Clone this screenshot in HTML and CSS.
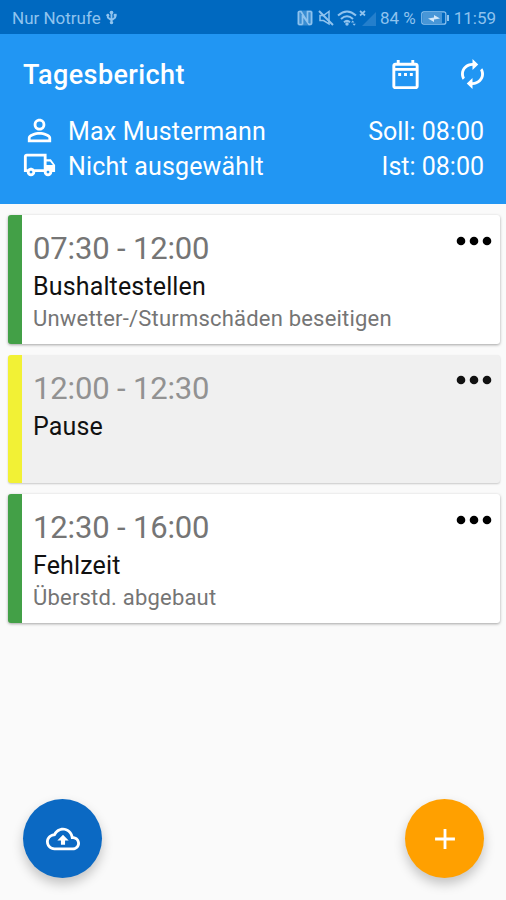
FILE: index.html
```html
<!DOCTYPE html>
<html lang="de">
<head>
    <meta charset="UTF-8">
    <meta name="viewport" content="width=device-width, initial-scale=1.0">
    <title>Tagesbericht</title>
    <link rel="stylesheet" href="styles.css">
</head>
<body>
    <div class="statusbar">
        <span class="carrier">Nur Notrufe</span>
        <svg class="usb" viewBox="0 0 12 16"><path d="M6 1v14M2 5v3l4 3 4-3V5" fill="none" stroke="currentColor" stroke-width="2"/><circle cx="6" cy="2.5" r="2"/><circle cx="6" cy="13.5" r="1.8"/><circle cx="2" cy="5.5" r="1.6"/><path d="M8.4 4h3.2v3H8.4z"/></svg>
        <div class="status-icons">
            <svg class="nfc" viewBox="0 0 16 16"><rect x=".5" y=".5" width="15" height="15" rx="2" opacity=".4"/><path d="M1.500 14.500V2.500Q1.500 1.500 2.500 1.500H4l6.500 10.500V5M5.500 5v9.500M5.500 14.500h-4M14.500 1.500v11.500q0 1.500-1.500 1.500h-1L5.500 5M10.500 5V1.500h4" fill="none" stroke="currentColor" stroke-width="1.700"/></svg>
            <svg class="mute" viewBox="0 0 16 16"><path d="M2 5.500h3.500L11 1.500v12.500L5.500 10.500H2z" fill="none" stroke="currentColor" stroke-width="1.500"/><path d="M1 1l14 14" stroke="currentColor" stroke-width="2"/></svg>
            <svg class="wifi" viewBox="0 0 20 16"><path d="M1 5.500Q10-2.500 19 5.500M4 9Q10 3.500 16 9M7 12.200Q10 9.500 13 12.200" fill="none" stroke="currentColor" stroke-width="2"/><circle cx="10" cy="14" r="1.700"/><path d="M14 12.500l1.700-2 1.700 2zM15.500 13.700h3.400l-1.700 2z"/></svg>
            <svg class="signal" viewBox="0 0 18 16"><path d="M17 2v14H3z" opacity=".25"/><path d="M1 1l5 4.500M6 1L1 5.500" stroke="currentColor" stroke-width="1.700"/></svg>
            <span class="percent">84 %</span>
            <svg class="battery" viewBox="0 0 28 14"><rect x=".8" y=".8" width="24" height="12.400" rx="2" fill="none" stroke="currentColor" stroke-width="1.200"/><rect x="2" y="2" width="19" height="10" opacity=".5"/><path d="M26 4h2v6h-2z"/><path d="M7 7.500l6-1V4l6 3.500-6 1V11z" fill="#d3e8fa"/></svg>
            <span class="clock">11:59</span>
        </div>
    </div>

    <header class="header">
        <div class="toolbar">
            <h1>Tagesbericht</h1>
            <svg class="icon calendar" viewBox="0 0 24 24"><path d="M19 4h-1V2h-2v2H8V2H6v2H5c-1.100 0-2 .9-2 2v14c0 1.100.9 2 2 2h14c1.100 0 2-.9 2-2V6c0-1.100-.9-2-2-2zm0 16H5V9.500h14V20zm0-12.500H5V6h14v1.500zM7 11h2v2H7zm4 0h2v2h-2zm4 0h2v2h-2z"/></svg>
            <svg class="icon sync" viewBox="4 1 16 22" preserveAspectRatio="none"><path d="M12 6v3l4-4-4-4v3c-4.420 0-8 3.580-8 8 0 1.570.46 3.030 1.240 4.260L6.700 14.800c-.45-.83-.7-1.790-.7-2.800 0-3.310 2.690-6 6-6zm6.760 1.740L17.300 9.200c.44.84.7 1.790.7 2.800 0 3.310-2.690 6-6 6v-3l-4 4 4 4v-3c4.420 0 8-3.580 8-8 0-1.570-.46-3.030-1.240-4.260z"/></svg>
        </div>
        <div class="info">
            <svg class="icon person" viewBox="0 0 24 24"><path d="M12 5.900a2.100 2.100 0 1 1 0 4.200 2.100 2.100 0 0 1 0-4.200m0 9c2.970 0 6.100 1.460 6.100 2.100v1.100H5.900V17c0-.64 3.130-2.100 6.100-2.100M12 4C9.790 4 8 5.790 8 8s1.790 4 4 4 4-1.790 4-4-1.790-4-4-4zm0 9c-2.670 0-8 1.340-8 4v3h16v-3c0-2.660-5.330-4-8-4z"/></svg>
            <span class="user">Max Mustermann</span>
            <span class="hours">Soll: 08:00</span>
        </div>
        <div class="info">
            <svg class="icon truck" viewBox="0 0 24 24"><path fill-rule="evenodd" d="M20 8h-3V4H3c-1.100 0-2 .9-2 2v11h2c0 1.660 1.340 3 3 3s3-1.340 3-3h6c0 1.660 1.340 3 3 3s3-1.340 3-3h2v-5l-3-4zm-.5 1.500l1.960 2.500H17V9.500h2.500zM6 18c-.55 0-1-.45-1-1s.45-1 1-1 1 .45 1 1-.45 1-1 1zm2.220-3c-.55-.61-1.330-1-2.220-1s-1.670.39-2.220 1H3V6h12v9H8.220zM18 18c-.55 0-1-.45-1-1s.45-1 1-1 1 .45 1 1-.45 1-1 1z"/></svg>
            <span class="vehicle">Nicht ausgewählt</span>
            <span class="hours">Ist: 08:00</span>
        </div>
    </header>

    <main class="list">
        <article class="card">
            <div class="entry">
                <div class="time">07:30 - 12:00</div>
                <div class="name">Bushaltestellen</div>
                <div class="desc">Unwetter-/Sturmschäden beseitigen</div>
            </div>
            <svg class="more" viewBox="0 0 36 10"><circle cx="5" cy="5" r="4.300"/><circle cx="18" cy="5" r="4.300"/><circle cx="31" cy="5" r="4.300"/></svg>
        </article>
        <article class="card pause">
            <div class="entry">
                <div class="time">12:00 - 12:30</div>
                <div class="name">Pause</div>
            </div>
            <svg class="more" viewBox="0 0 36 10"><circle cx="5" cy="5" r="4.300"/><circle cx="18" cy="5" r="4.300"/><circle cx="31" cy="5" r="4.300"/></svg>
        </article>
        <article class="card">
            <div class="entry">
                <div class="time">12:30 - 16:00</div>
                <div class="name">Fehlzeit</div>
                <div class="desc">Überstd. abgebaut</div>
            </div>
            <svg class="more" viewBox="0 0 36 10"><circle cx="5" cy="5" r="4.300"/><circle cx="18" cy="5" r="4.300"/><circle cx="31" cy="5" r="4.300"/></svg>
        </article>
    </main>

    <footer class="actions">
        <button class="fab upload" aria-label="Hochladen">
            <svg viewBox="0 0 24 24"><path d="M19.350 10.040C18.670 6.590 15.640 4 12 4 9.110 4 6.600 5.640 5.350 8.040 2.340 8.360 0 10.910 0 14c0 3.310 2.690 6 6 6h13c2.760 0 5-2.240 5-5 0-2.640-2.050-4.780-4.650-4.960zM19 18H6c-2.210 0-4-1.790-4-4 0-2.050 1.530-3.760 3.560-3.970l1.070-.11.5-.95C8.080 7.140 9.940 6 12 6c2.620 0 4.880 1.860 5.390 4.430l.3 1.500 1.530.11c1.560.1 2.780 1.410 2.780 2.960 0 1.650-1.350 3-3 3zM8 13h2.550v3h2.900v-3H16l-4-4z"/></svg>
        </button>
        <button class="fab add" aria-label="Hinzufügen">
            <svg viewBox="0 0 24 24"><path d="M19 13h-6v6h-2v-6H5v-2h6V5h2v6h6v2z"/></svg>
        </button>
    </footer>
</body>
</html>
```
FILE: styles.css
```css
* {
    box-sizing: border-box;
}
body {
    margin: 0;
    height: 900px;
    display: flex;
    flex-direction: column;
    font-family: Roboto, "Liberation Sans", sans-serif;
    background-color: #fafafa;
    overflow: hidden;
}
svg {
    display: block;
    flex: none;
    fill: currentColor;
}

/* Statusleiste */
.statusbar {
    display: flex;
    align-items: center;
    height: 34px;
    padding: 2px 10px 0 12px;
    background-color: #0069c0;
    color: #8fc3ee;
    font-size: 17px;
    line-height: 32px;
}
.usb {
    width: 11px;
    height: 15px;
    margin-left: 5px;
    margin-top: -1px;
}
.status-icons {
    display: flex;
    align-items: center;
    margin-left: auto;
}
.nfc, .mute {
    width: 16px;
    height: 16px;
}
.mute {
    margin-left: 5px;
}
.wifi {
    width: 20px;
    height: 16px;
    margin-left: 3px;
}
.signal {
    width: 18px;
    height: 16px;
    margin-left: 2px;
}
.percent {
    margin-left: 3px;
}
.battery {
    width: 28px;
    height: 14px;
    margin: 0 5px 0 5px;
}

/* Kopfbereich */
.header {
    height: 170px;
    padding: 0 22px;
    background-color: #2196f3;
    color: #fff;
}
.toolbar {
    display: flex;
    align-items: center;
    height: 81px;
}
h1 {
    flex: 1;
    margin: 0 0 0 1px;
    font-size: 27px;
    font-weight: 500;
    letter-spacing: 0.4px;
}
.icon {
    width: 35px;
    height: 35px;
}
.calendar {
    margin-top: -1px;
}
.sync {
    width: 23px;
    height: 30px;
    margin: -1px 0 0 38px;
}
.info {
    display: flex;
    align-items: center;
    height: 34.5px;
    font-size: 25px;
    line-height: 34px;
}
.person {
    margin-top: -4px;
}
.truck {
    height: 34px;
    margin-top: -4px;
}
.user, .vehicle {
    margin-left: 11px;
    letter-spacing: 0.17px;
}
.hours {
    margin-left: auto;
}

/* Karten */
.list {
    display: flex;
    flex-direction: column;
    flex: 1;
    gap: 11px;
    padding: 11px 6px 0 8px;
}
.card {
    display: flex;
    justify-content: space-between;
    height: 128.7px;
    padding: 14px 8px 0 11px;
    border-left: 14px solid #43a047;
    border-radius: 3px;
    background-color: #fff;
    box-shadow: 0 1px 3px rgba(0, 0, 0, 0.35);
}
.time {
    margin-bottom: 1px;
    font-size: 31px;
    line-height: 40px;
    letter-spacing: -0.15px;
    color: #757575;
}
.name {
    font-size: 25px;
    line-height: 34px;
    letter-spacing: 0.15px;
    color: #111;
}
.desc {
    font-size: 22px;
    line-height: 30px;
    letter-spacing: 0.2px;
    color: #757575;
}
.more {
    width: 36px;
    height: 10px;
    margin-top: 6.5px;
    color: #000;
}
.pause {
    border-left-color: #f2f135;
    background-color: #f0f0f0;
    box-shadow: 0 1px 2px rgba(0, 0, 0, 0.2);
}
.pause .time {
    color: #929292;
}
.pause .more {
    color: #111;
}

/* Schwebende Buttons */
.actions {
    display: flex;
    justify-content: space-between;
    padding: 0 22px 22px 23px;
}
.fab {
    display: flex;
    align-items: center;
    justify-content: center;
    width: 79px;
    height: 79px;
    padding: 0;
    border: none;
    border-radius: 50%;
    color: #fff;
    box-shadow: 0 6px 12px rgba(0, 0, 0, 0.22);
}
.fab svg {
    width: 34px;
    height: 34px;
}
.upload {
    background-color: #0b69c3;
}
.add {
    background-color: #ffa000;
}
```
